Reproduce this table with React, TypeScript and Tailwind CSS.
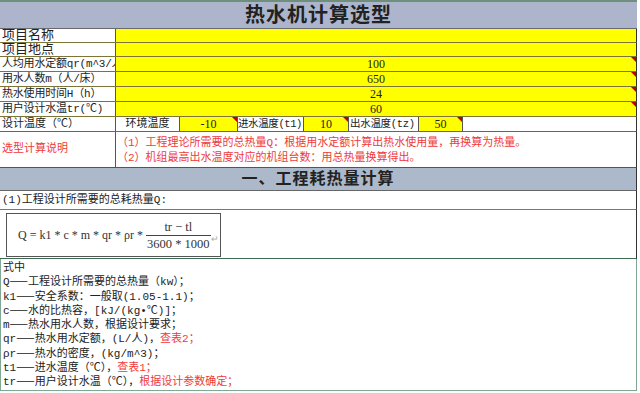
import React from 'react';

const RED = 'text-[#ee3b3b]';
const BODY = { fontFamily: '"Liberation Mono", "Noto Sans CJK SC", monospace' };
const SERIF = { fontFamily: '"Liberation Serif", "Noto Sans CJK SC", serif' };
const CJK = { fontFamily: '"Noto Sans CJK SC", sans-serif' };

function Marker() {
  return (
    <span className="absolute right-0 top-0 w-0 h-0 border-l-[5px] border-l-transparent border-t-[5px] border-t-[#c00000]" />
  );
}

const inputRows = [
  { label: '项目名称', value: '', big: true, h: 'h-[14px]' },
  { label: '项目地点', value: '', big: true, h: 'h-[14px]' },
  { label: '人均用水定额qr(m^3/人)', value: '100', h: 'h-[15px]', mark: true },
  { label: '用水人数m（人/床）', value: '650', h: 'h-[15px]', mark: true },
  { label: '热水使用时间H（h）', value: '24', h: 'h-[15px]', mark: true },
  { label: '用户设计水温tr(℃)', value: '60', h: 'h-[15px]', mark: true },
];

const notes: { sym: string; text: string; red?: string }[] = [
  { sym: 'Q', text: '工程设计所需要的总热量（kw）；' },
  { sym: 'k1', text: '安全系数：一般取(1.05-1.1)；' },
  { sym: 'c', text: '水的比热容，[kJ/(kg•℃)]；' },
  { sym: 'm', text: '热水用水人数，根据设计要求；' },
  { sym: 'qr', text: '热水用水定额，(L/人)，', red: '查表2；' },
  { sym: 'ρr', text: '热水的密度，(kg/m^3)；' },
  { sym: 't1', text: '进水温度（℃），', red: '查表1；' },
  { sym: 'tr', text: '用户设计水温（℃），', red: '根据设计参数确定；' },
];

export default function App() {
  return (
    <div className="w-[640px] h-[393px] bg-white text-[#222] overflow-hidden" style={BODY}>
      <div className="w-[637px]">
        {/* top edge */}
        <div className="h-[2px] bg-[#6f8f7d]" />

        {/* title */}
        <div
          className="h-[27px] bg-[#acb5cb] border-b border-[#6a6a6a] flex items-center justify-center text-[20px] font-bold leading-none tracking-[1px]"
          style={SERIF}
        >
          热水机计算选型
        </div>

        {/* input rows */}
        {inputRows.map((r) => (
          <div key={r.label} className={`flex ${r.h} border-b border-[#7d7538] border-r border-r-[#333]`}>
            <div
              className={`w-[116px] shrink-0 bg-white border-r border-[#555] pl-[2px] whitespace-nowrap overflow-hidden leading-[14px] ${
                r.big ? 'text-[13px]' : 'text-[11px] tracking-[-0.2px]'
              }`}
            >
              {r.label}
            </div>
            <div className="relative flex-1 bg-[#ffff00] text-center text-[12px] leading-[14px]" style={SERIF}>
              {r.value}
              {r.mark && <Marker />}
            </div>
          </div>
        ))}

        {/* design temperature row */}
        <div className="flex h-[15px] border-b border-[#666] border-r border-r-[#333] text-[11px] leading-[14px]">
          <div className="w-[116px] shrink-0 border-r border-[#555] pl-[2px] whitespace-nowrap">设计温度（℃）</div>
          <div className="w-[64px] shrink-0 border-r border-[#555] text-center">环境温度</div>
          <div className="relative w-[58px] shrink-0 bg-[#ffff00] border-r border-[#555] text-center text-[12px]" style={SERIF}>
            -10
            <Marker />
          </div>
          <div className="w-[66px] shrink-0 border-r border-[#555] whitespace-nowrap text-[10.5px] tracking-[-0.4px]">
            进水温度(t1)
          </div>
          <div className="relative w-[45px] shrink-0 bg-[#ffff00] border-r border-[#555] text-center text-[12px]" style={SERIF}>
            10
            <Marker />
          </div>
          <div className="w-[70px] shrink-0 border-r border-[#555] pl-[1px] whitespace-nowrap text-[10.5px] tracking-[-0.3px]">
            出水温度(tz)
          </div>
          <div className="relative w-[44px] shrink-0 bg-[#ffff00] border-r border-[#555] text-center text-[12px]" style={SERIF}>
            50
            <Marker />
          </div>
          <div className="flex-1" />
        </div>

        {/* explanation */}
        <div className={`flex h-[36px] border-b border-[#555] border-r border-r-[#333] text-[11px] ${RED}`}>
          <div className="w-[116px] shrink-0 border-r border-[#555] pl-[2px] flex items-center">选型计算说明</div>
          <div className="flex-1 pl-[1px] pt-[4px] leading-[15px] whitespace-nowrap">
            <div>（1）工程理论所需要的总热量Q：根据用水定额计算出热水使用量，再换算为热量。</div>
            <div>（2）机组最高出水温度对应的机组台数：用总热量换算得出。</div>
          </div>
        </div>

        {/* section header */}
        <div
          className="h-[23px] bg-[#acb9ca] border-b border-[#666] border-r border-r-[#333] flex items-center justify-center text-[16px] font-bold tracking-[1px]"
          style={SERIF}
        >
          一、工程耗热量计算
        </div>

        {/* (1) */}
        <div className="h-[19px] border-b border-[#777] border-r border-r-[#333] pl-[2px] text-[11px] leading-[19px]">
          (1)工程设计所需要的总耗热量Q:
        </div>

        {/* formula */}
        <div className="h-[49px] border-b border-[#3f6b52] border-r border-r-[#333] pl-[6px] pt-[3px]">
          <div
            className="w-[215px] h-[44px] border border-[#555] flex items-center pl-[11px] text-[12px] text-[#333] whitespace-nowrap"
            style={SERIF}
          >
            <span className="whitespace-pre">Q = k1 * c * m * qr * ρr *</span>
            <span className="flex flex-col items-center ml-[3px] leading-[16px] text-[12.5px]">
              <span className="px-[2px]">tr − tl</span>
              <span className="border-t border-[#444] px-[1px]">3600 * 1000</span>
            </span>
            <span className="text-[9px] text-[#aaa] mt-[10px]">↵</span>
          </div>
        </div>

        {/* legend */}
        <div className="h-[132px] border-l border-r border-b border-[#7fa892] pl-[2px] pt-[2px] text-[11px] leading-[14px] whitespace-nowrap">
          <div className="h-[14.3px]">式中</div>
          {notes.map((n) => (
            <div key={n.sym} className="h-[14.3px]">
              {n.sym}
              <span className="leading-[10px]" style={CJK}>——</span>
              {n.text}
              {n.red && <span className={RED}>{n.red}</span>}
            </div>
          ))}
        </div>
      </div>
    </div>
  );
}
